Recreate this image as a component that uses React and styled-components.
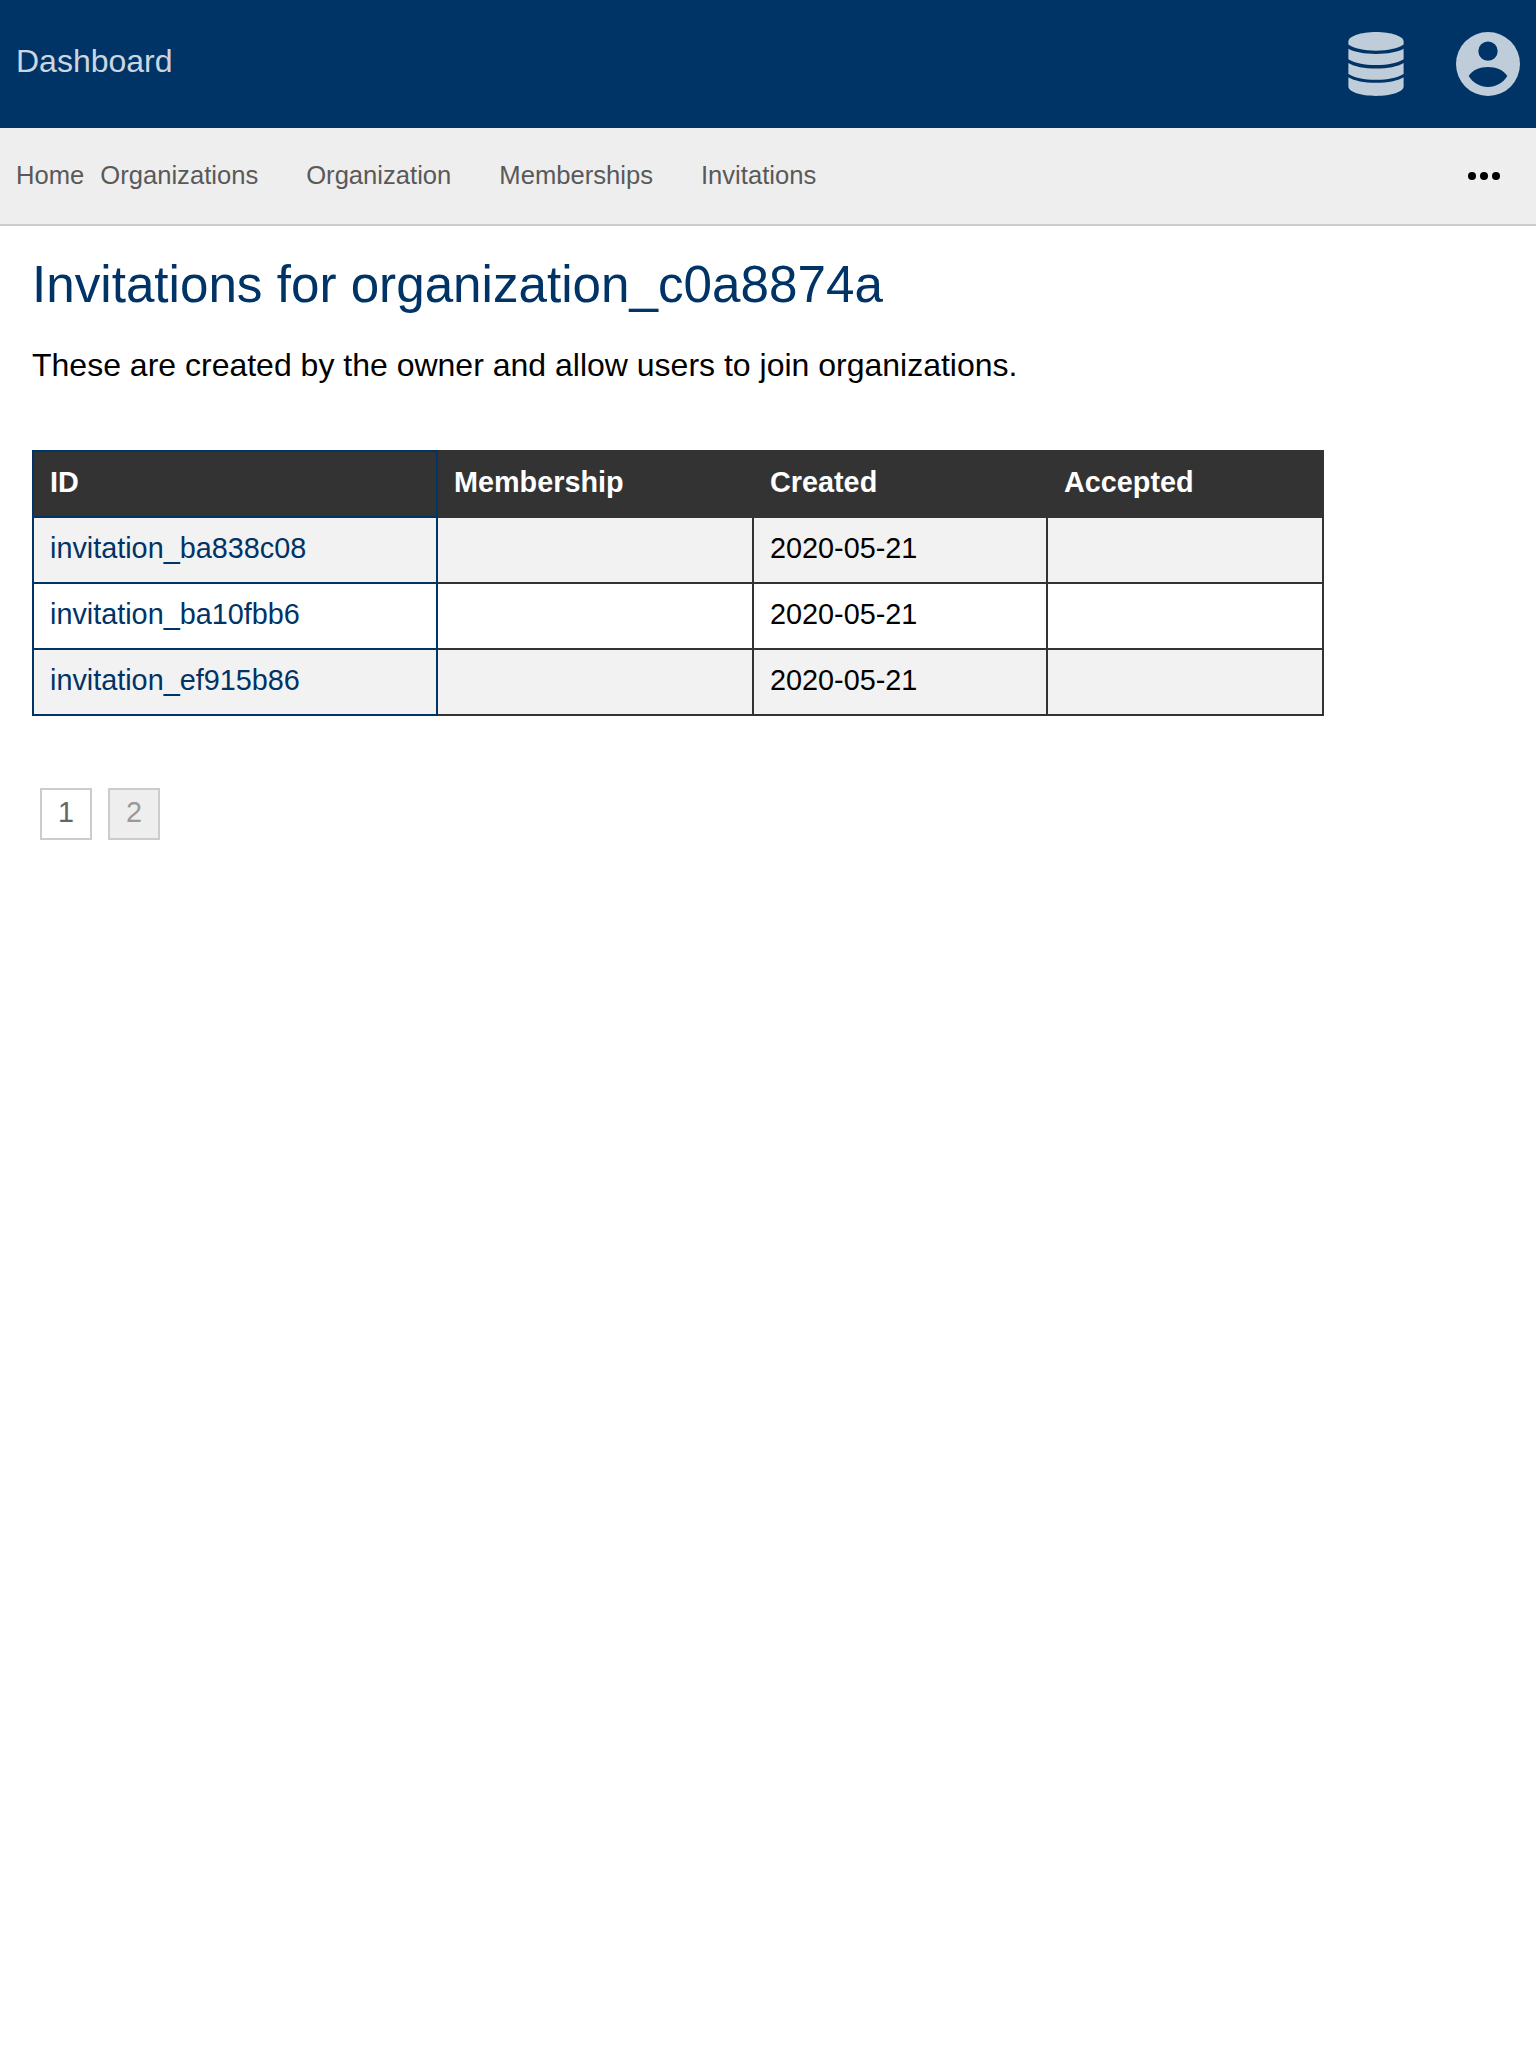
import React from "react";
import styled, { createGlobalStyle } from "styled-components";

const Global = createGlobalStyle`
  body {
    margin: 0;
    background: #fff;
    color: #000;
    font-family: "Liberation Sans", Arial, sans-serif;
    font-size: 32px;
  }
`;

const Header = styled.header`
  display: flex;
  justify-content: space-between;
  box-sizing: border-box;
  height: 128px;
  padding: 32px 16px;
  background: #003366;
`;

const HeaderTitle = styled.a`
  height: 58px;
  line-height: 58px;
  color: #ccd6e0;
`;

const HeaderIcons = styled.div`
  display: flex;
  gap: 52px;
`;

const Icon = styled.svg`
  display: block;
  width: ${(p) => p.$width}px;
  height: 64px;
  fill: #bfccd9;
`;

const Nav = styled.nav`
  display: flex;
  align-items: center;
  height: 96px;
  padding: 0 36px 0 16px;
  border-bottom: 2px solid #ccc;
  background: #eee;
`;

const NavLink = styled.a`
  margin-right: ${(p) => p.$gap}px;
  padding-bottom: 2px;
  color: #595959;
  font-size: 25.6px;
  line-height: 32px;
`;

const MoreIcon = styled.svg`
  display: block;
  width: 32px;
  height: 8px;
  margin-left: auto;
`;

const Main = styled.main`
  padding: 32px;
`;

const Title = styled.h1`
  margin: 0;
  color: #003366;
  font-size: 51.2px;
  font-weight: 400;
  line-height: 54px;
`;

const Intro = styled.p`
  margin: 34px 0 66px;
  line-height: 38px;
`;

const Table = styled.table`
  width: 1292px;
  table-layout: fixed;
  border-collapse: collapse;
  font-size: 28.8px;
  line-height: 32px;
`;

const Col = styled.col`
  width: ${(p) => p.$width}px;
`;

const Row = styled.tr`
  background: ${(p) => (p.$shaded ? "#f2f2f2" : "#fff")};
`;

const HeadCell = styled.th`
  height: 32px;
  padding: 14px 16px 18px;
  border: 2px solid ${(p) => (p.$primary ? "#003366" : "#333")};
  background: #333;
  color: #fff;
  text-align: left;
`;

const Cell = styled.td`
  height: 32px;
  padding: 14px 16px 18px;
  border: 2px solid ${(p) => (p.$primary ? "#003366" : "#333")};
  color: ${(p) => (p.$primary ? "#003366" : "#000")};
`;

const Pagination = styled.div`
  display: flex;
  gap: 16px;
  margin: 72px 8px 0;
`;

const Page = styled.a`
  width: 48px;
  height: 48px;
  border: 2px solid #ccc;
  background: ${(p) => (p.$muted ? "#eee" : "#fff")};
  color: ${(p) => (p.$muted ? "#999" : "#666")};
  font-size: 28.8px;
  line-height: 44px;
  text-align: center;
`;

const links = [
  ["Home", 16],
  ["Organizations", 48],
  ["Organization", 48],
  ["Memberships", 48],
  ["Invitations", 0],
];

const columns = [
  ["ID", 404],
  ["Membership", 316],
  ["Created", 294],
  ["Accepted", 276],
];

const invitations = [
  ["invitation_ba838c08", "2020-05-21"],
  ["invitation_ba10fbb6", "2020-05-21"],
  ["invitation_ef915b86", "2020-05-21"],
];

export default function App() {
  return (
    <>
      <Global />
      <Header>
        <HeaderTitle>Dashboard</HeaderTitle>
        <HeaderIcons>
          <Icon $width={56} viewBox="-0.4 0 56.8 64" preserveAspectRatio="none">
            <path d="M28 0C43.500 0 56 4.200 56 9.400V12.500C50 16.500 40 18.700 28 18.700S6 16.500 0 12.500V9.400C0 4.200 12.500 0 28 0z" />
            <path d="M0 16.700C6 20 16 21.900 28 21.900S50 20 56 16.700V27.200C50 31 40 33 28 33S6 31 0 27.200z" />
            <path d="M0 31C6 34.600 16 36.600 28 36.600S50 34.600 56 31V41.900C50 45.700 40 47.700 28 47.700S6 45.700 0 41.900z" />
            <path d="M0 45.200C6 48.800 16 50.800 28 50.800S50 48.800 56 45.200V54.600C56 59.800 43.500 64 28 64S0 59.800 0 54.600z" />
          </Icon>
          <Icon $width={64} viewBox="0 0 64 64">
            <path
              fillRule="evenodd"
              d="M32 0a32 32 0 1 1 0 64a32 32 0 1 1 0-64zM32 9.400a9.700 9.700 0 1 0 0 19.400a9.700 9.700 0 1 0 0-19.400zM12.700 44C17 50.900 24 55 32 55S47 50.900 51.300 44C48 38.200 40 35 32 35S16 38.200 12.700 44z"
            />
          </Icon>
        </HeaderIcons>
      </Header>
      <Nav>
        {links.map(([label, gap]) => (
          <NavLink key={label} $gap={gap}>
            {label}
          </NavLink>
        ))}
        <MoreIcon viewBox="0 0 32 8">
          <circle cx="4" cy="4" r="4" />
          <circle cx="16" cy="4" r="4" />
          <circle cx="28" cy="4" r="4" />
        </MoreIcon>
      </Nav>
      <Main>
        <Title>Invitations for organization_c0a8874a</Title>
        <Intro>These are created by the owner and allow users to join organizations.</Intro>
        <Table>
          <colgroup>
            {columns.map(([label, width]) => (
              <Col key={label} $width={width} />
            ))}
          </colgroup>
          <thead>
            <tr>
              {columns.map(([label], i) => (
                <HeadCell key={label} $primary={i === 0}>
                  {label}
                </HeadCell>
              ))}
            </tr>
          </thead>
          <tbody>
            {invitations.map(([id, created], i) => (
              <Row key={id} $shaded={i % 2 === 0}>
                <Cell $primary>{id}</Cell>
                <Cell />
                <Cell>{created}</Cell>
                <Cell />
              </Row>
            ))}
          </tbody>
        </Table>
        <Pagination>
          <Page>1</Page>
          <Page $muted>2</Page>
        </Pagination>
      </Main>
    </>
  );
}
